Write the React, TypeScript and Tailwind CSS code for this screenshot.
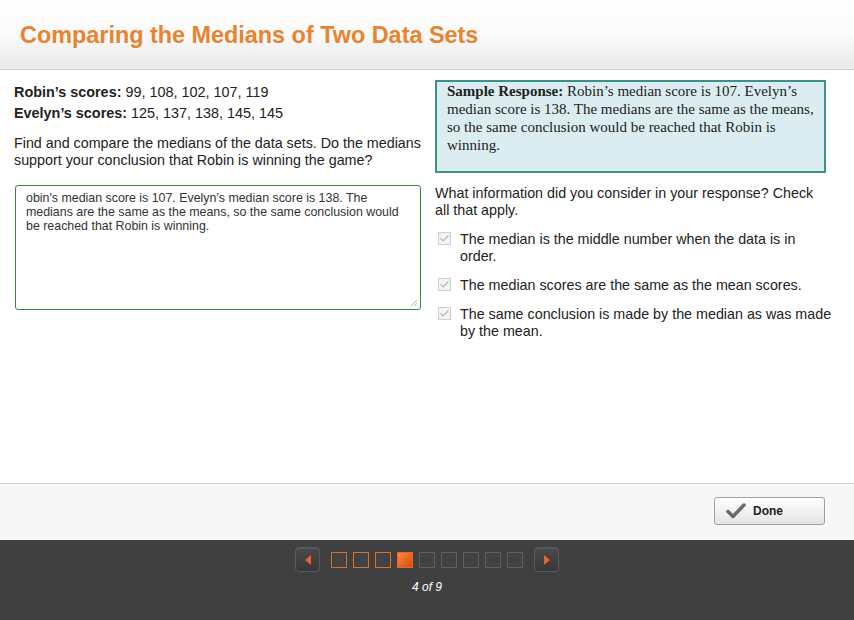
import { Check } from 'lucide-react';

const options = [
  'The median is the middle number when the data is in order.',
  'The median scores are the same as the mean scores.',
  'The same conclusion is made by the median as was made by the mean.',
];

function CheckBox() {
  return (
    <span className="mt-[1px] flex h-[13px] w-[13px] shrink-0 items-center justify-center border border-[#cfcfcf] bg-[#f4f4f4]">
      <Check className="h-[11px] w-[11px] text-[#b5b5b5]" strokeWidth={2.5} />
    </span>
  );
}

function NavArrow({ dir }: { dir: 'left' | 'right' }) {
  return (
    <button
      type="button"
      className="flex h-[25px] w-[25px] items-center justify-center rounded-[4px] border border-[#5a5a5a] bg-gradient-to-b from-[#4a4a4a] to-[#383838] shadow-[inset_0_1px_0_rgba(255,255,255,0.08)]"
    >
      <svg width="8" height="10" viewBox="0 0 8 10">
        {dir === 'left' ? (
          <path d="M7 0 L1 5 L7 10 Z" fill="#e8632a" />
        ) : (
          <path d="M1 0 L7 5 L1 10 Z" fill="#e8632a" />
        )}
      </svg>
    </button>
  );
}

export default function App() {
  return (
    <div className="flex h-[620px] w-[854px] flex-col bg-white font-['Liberation_Sans',Arial,sans-serif] text-[#222]">
      {/* Header */}
      <div className="h-[70px] shrink-0 border-b border-[#cfcfcf] bg-gradient-to-b from-white via-[#fafafa] to-[#e9e9e9] px-[20px] pt-[20px]">
        <h1 className="text-[23.4px] font-bold leading-[30px] text-[#e8832f]">
          Comparing the Medians of Two Data Sets
        </h1>
      </div>

      {/* Content */}
      <div className="flex h-[414px] shrink-0 gap-[13px] border-b border-[#d4d4d4] pl-[14px] pt-[12px]">
        <div className="w-[408px] shrink-0">
          <p className="text-[14.4px] leading-[21px]">
            <b>Robin’s scores:</b> 99, 108, 102, 107, 119
          </p>
          <p className="text-[14.4px] leading-[21px]">
            <b>Evelyn’s scores:</b> 125, 137, 138, 145, 145
          </p>
          <p className="mt-[11px] w-[414px] text-[14.3px] leading-[17px]">
            Find and compare the medians of the data sets. Do the medians support your conclusion that Robin is winning the game?
          </p>
          <div className="relative ml-[1px] mt-[16px] h-[125px] w-[406px] whitespace-nowrap rounded-[3px] border border-[#3a8a3e] px-[10px] py-[5px] text-[12.4px] leading-[14px] text-[#333]">
            obin's median score is 107. Evelyn's median score is 138. The
            <br />
            medians are the same as the means, so the same conclusion would
            <br />
            be reached that Robin is winning.
            <svg className="absolute bottom-[2px] right-[2px]" width="8" height="8" viewBox="0 0 8 8">
              <path d="M7 1 L1 7 M7 4 L4 7" stroke="#bbb" strokeWidth="1" />
            </svg>
          </div>
        </div>

        <div className="w-[400px] shrink-0">
          <div className="-mt-[2px] h-[93px] w-[391px] border-2 border-[#3c9189] bg-[#dcedf2] px-[10px] font-['Liberation_Serif',Georgia,serif] text-[15px] leading-[18px] text-[#222]">
            <b>Sample Response:</b> Robin’s median score is 107. Evelyn’s median score is 138. The medians are the same as the means, so the same conclusion would be reached that Robin is winning.
          </div>
          <p className="mt-[12px] w-[391px] text-[14.3px] leading-[17px]">
            What information did you consider in your response? Check all that apply.
          </p>
          <div className="mt-[12px] flex flex-col gap-[12px] pl-[3px]">
            {options.map((o) => (
              <div key={o} className="flex items-start gap-[9px]">
                <CheckBox />
                <span className="text-[14.3px] leading-[17px] text-[#222]">{o}</span>
              </div>
            ))}
          </div>
        </div>
      </div>

      {/* Footer */}
      <div className="flex h-[56px] shrink-0 items-start justify-end bg-[#f7f7f7] pr-[29px] pt-[13px]">
        <button
          type="button"
          className="flex h-[28px] w-[111px] items-center gap-[7px] rounded-[3px] border border-[#a0a0a0] bg-gradient-to-b from-white to-[#e4e4e4] pl-[11px] text-[12px] font-bold text-[#222]"
        >
          <svg width="20" height="16" viewBox="0 0 20 16">
            <path d="M2 8.5 L7 13.5 L18 2" fill="none" stroke="#6a6a6a" strokeWidth="3.5" strokeLinecap="round" strokeLinejoin="round" />
          </svg>
          Done
        </button>
      </div>

      {/* Nav bar */}
      <div className="flex flex-1 flex-col items-center bg-[#404040] pt-[7px]">
        <div className="flex items-center gap-[11px]">
          <NavArrow dir="left" />
          <div className="flex gap-[6px]">
            {Array.from({ length: 9 }).map((_, i) => (
              <div
                key={i}
                className={
                  i === 3
                    ? 'h-[16px] w-[16px] border border-[#e86a1e] bg-gradient-to-br from-[#f58a3a] to-[#d9480f]'
                    : i < 3
                      ? 'h-[16px] w-[16px] border border-[#d9702a] bg-[#424242]'
                      : 'h-[16px] w-[16px] border border-[#5e5e5e] bg-[#424242]'
                }
              />
            ))}
          </div>
          <NavArrow dir="right" />
        </div>
        <p className="mt-[6px] text-[12px] italic text-white">4 of 9</p>
      </div>
    </div>
  );
}
